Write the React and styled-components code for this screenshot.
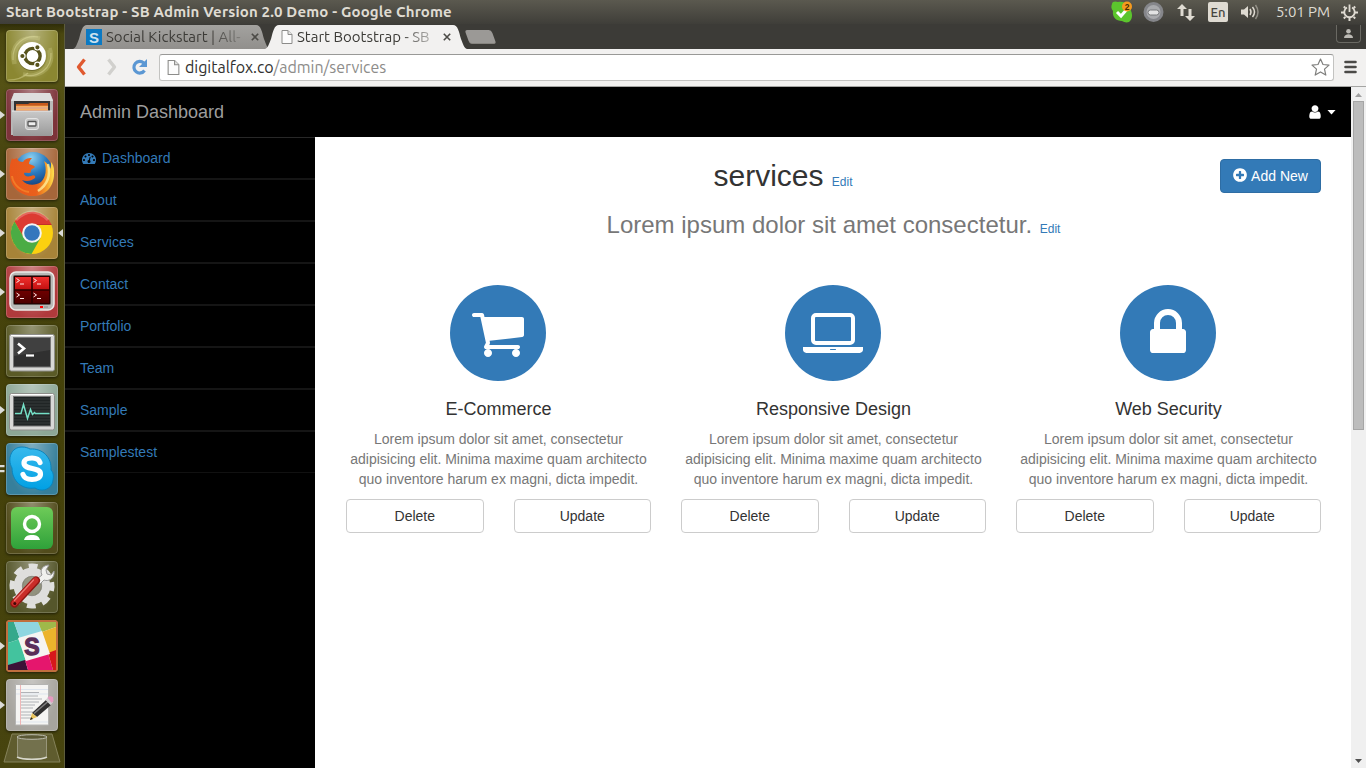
import React from "react";
import styled, { createGlobalStyle } from "styled-components";

const Global = createGlobalStyle`
  * { box-sizing: border-box; }
  html, body { margin: 0; padding: 0; overflow: hidden; }
  body { font-family: "Liberation Sans", Arial, sans-serif; font-size: 14px; line-height: 20px; color: #333; background: #000; }
  h1, h2, h3, p { margin: 0; font-weight: normal; }
  svg { display: block; flex: none; }
`;

const uiFont = `Ubuntu, "Open Sans", "Noto Sans", sans-serif`;

const Desktop = styled.div`
  width: 1366px;
  height: 768px;
  display: flex;
  flex-direction: column;
  overflow: hidden;
`;

/* ---------- top panel ---------- */
const Panel = styled.header`
  height: 24px;
  flex: none;
  display: flex;
  align-items: center;
  padding: 0 8px 0 6px;
  background: linear-gradient(#5b594f, #3f3e39);
  font-family: ${uiFont};
  color: #dfdbd2;
`;
const PanelTitle = styled.div`
  flex: 1;
  font-size: 15px;
  font-weight: 700;
  line-height: 24px;
  letter-spacing: ${(p) => p.$track || "0"};
  white-space: nowrap;
`;
const Indicators = styled.div`
  display: flex;
  align-items: center;
  height: 24px;
`;
const Slot = styled.div`
  width: ${(p) => p.$w}px;
  flex: none;
`;
const Clock = styled.div`
  width: 65px;
  font-size: 15px;
  line-height: 24px;
  letter-spacing: -0.1px;
  white-space: nowrap;
`;
const Lang = styled.div`
  width: 20px;
  height: 20px;
  border-radius: 2px;
  background: #dfdbd2;
  color: #45443e;
  font-size: 13px;
  font-weight: 500;
  line-height: 21px;
  text-align: center;
`;

/* ---------- launcher ---------- */
const Body = styled.div`
  flex: 1;
  display: flex;
  min-height: 0;
`;
const Launcher = styled.nav`
  width: 65px;
  flex: none;
  padding-top: 6px;
  display: flex;
  flex-direction: column;
  gap: 7px;
  border-right: 1px solid #5d5c3c;
  background: linear-gradient(#2f2d08 0, #4a470f 10px, #555215 60px, #48450f 130px, #444109 400px, #47440f 100%);
  overflow: hidden;
`;
const LaunchRow = styled.div`
  height: 52px;
  flex: none;
  display: grid;
  grid-template-columns: 6px 52px 6px;
  align-items: center;
`;
const Tile = styled.div`
  width: 52px;
  height: 52px;
  border-radius: 4px;
  background: radial-gradient(ellipse at 50% 0, rgba(255, 255, 255, 0.36), rgba(255, 255, 255, 0) 75%), ${(p) => p.$bg};
  box-shadow: inset 0 0 0 1px rgba(255, 255, 255, 0.18), 0 1px 3px rgba(0, 0, 0, 0.55);
`;
const Pip = styled.div`
  width: 5px;
  height: 8px;
  background: #dcdcd8;
  clip-path: ${(p) =>
    p.$kind === "double"
      ? "polygon(0 0, 90% 0, 90% 28%, 0 28%, 0 62%, 90% 62%, 90% 90%, 0 90%)"
      : p.$kind === "right"
      ? "polygon(100% 0, 0 50%, 100% 100%)"
      : "polygon(0 0, 100% 50%, 0 100%)"};
  visibility: ${(p) => (p.$kind ? "visible" : "hidden")};
`;
const TrashRow = styled.div`
  margin-top: -5px;
  padding-left: 3px;
`;

/* ---------- browser chrome ---------- */
const Browser = styled.section`
  flex: 1;
  min-width: 0;
  display: flex;
  flex-direction: column;
`;
const TabStrip = styled.div`
  height: 25px;
  flex: none;
  display: flex;
  align-items: flex-end;
  padding-left: 8px;
  background: #3c3b37;
  font-family: ${uiFont};
`;
const TabShape = styled.div`
  width: ${(p) => p.$w}px;
  height: 24px;
  margin-left: ${(p) => (p.$active ? -5 : 0)}px;
  padding: 0 ${(p) => (p.$active ? 15 : 10)}px 0 ${(p) => (p.$active ? 16 : 13)}px;
  display: flex;
  align-items: center;
  background: ${(p) => (p.$active ? "#f2f1f0" : "linear-gradient(#a3a29f, #918f8c)")};
  clip-path: ${(p) =>
    `path("M0 24 C3 23 4 19 6 14 C8 7 9 0 14 0 H${p.$w - 14} C${p.$w - 9} 0 ${p.$w - 8} 7 ${p.$w - 6} 14 C${p.$w - 4} 19 ${p.$w - 3} 23 ${p.$w} 24 Z")`};
`;
const TabLabel = styled.div`
  flex: 1;
  min-width: 0;
  margin-left: 4px;
  overflow: hidden;
  white-space: nowrap;
  font-size: 15px;
  line-height: 24px;
  letter-spacing: ${(p) => p.$track};
  color: #3c3b37;
  mask-image: linear-gradient(90deg, #000 75%, rgba(0, 0, 0, 0.25) 100%);
`;
const TabClose = styled.div`
  width: 10px;
  margin-left: 8px;
`;
const NewTab = styled.div`
  width: 31px;
  height: 14px;
  margin: 0 0 5px -2px;
  background: #9b9996;
  border-bottom: 1px solid #86847f;
  border-radius: 3px;
  transform: skewX(20deg) scaleX(0.86);
`;
const Avatar = styled.div`
  width: 25px;
  height: 18px;
  margin: 0 5px 6px auto;
  display: flex;
  justify-content: center;
  padding-top: 4px;
  border: 1px solid #6a6963;
  border-top: 0;
  border-radius: 0 0 4px 4px;
  background: #383733;
`;
const Toolbar = styled.div`
  height: 38px;
  flex: none;
  display: flex;
  align-items: center;
  padding: 0 9px 1px 10px;
  background: #f2f1f0;
  border-bottom: 1px solid #a5a5a3;
`;
const Address = styled.div`
  flex: 1;
  height: 27px;
  display: flex;
  align-items: center;
  margin: 0 10px 0 11px;
  padding: 0 3px 0 7px;
  background: #fff;
  border: 1px solid #c3c3c1;
  border-top-color: #999997;
  border-radius: 3px;
`;
const Url = styled.div`
  flex: 1;
  margin-left: 5px;
  font-family: ${uiFont};
  font-size: 16px;
  line-height: 24px;
  letter-spacing: ${(p) => p.$track};
  color: #8d8c8a;
  white-space: nowrap;
  b { font-weight: normal; color: #30302e; }
`;

/* ---------- page ---------- */
const Viewport = styled.div`
  flex: 1;
  min-height: 0;
  display: flex;
`;
const Page = styled.div`
  flex: 1;
  display: flex;
  flex-direction: column;
  background: #000;
`;
const NavBar = styled.div`
  height: 50px;
  flex: none;
  display: flex;
  align-items: center;
  padding: 0 15px;
  justify-content: space-between;
`;
const Brand = styled.div`
  font-size: 18px;
  color: #9d9d9d;
`;
const UserMenu = styled.div`
  display: flex;
  align-items: center;
  gap: 4px;
`;
const Caret = styled.i`
  width: 9px;
  height: 5px;
  background: #fff;
  clip-path: polygon(0 0, 100% 0, 50% 100%);
`;
const Columns = styled.div`
  flex: 1;
  display: flex;
`;
const SideNav = styled.ul`
  width: 250px;
  flex: none;
  margin: 0;
  padding: 0;
  list-style: none;
  border-top: 1px solid #282828;
`;
const SideItem = styled.li`
  height: 42px;
  display: flex;
  align-items: center;
  gap: 4px;
  padding: 0 15px 1px;
  color: #337ab7;
  border-bottom: 2px solid #151515;
  &:last-child { border-bottom: 1px solid #111; height: 41px; margin-bottom: 1px; }
`;
const FixedIcon = styled.span`
  width: 18px;
  padding-top: 1px;
  display: flex;
  justify-content: center;
`;
const Main = styled.main`
  flex: 1;
  background: #fff;
  padding: 22px 15px 0 16px;
`;
const TitleRow = styled.div`
  display: flex;
  align-items: flex-start;
  padding: 0 15px;
  height: 53px;
`;
const Title = styled.h1`
  flex: 1;
  text-align: center;
  font-size: 30px;
  line-height: 33px;
`;
const EditLink = styled.a`
  font-size: 12px;
  color: #337ab7;
`;
const Subtitle = styled.h2`
  text-align: center;
  font-size: 24px;
  line-height: 26px;
  color: #777;
  ${EditLink} { margin-left: 1px; }
`;
const AddButton = styled.button`
  width: 101px;
  height: 34px;
  display: flex;
  align-items: center;
  justify-content: center;
  gap: 3px;
  padding: 0 1px 0 0;
  border: 1px solid #2e6da4;
  border-radius: 4px;
  background: #337ab7;
  color: #fff;
  font: 14px/20px "Liberation Sans", Arial, sans-serif;
  svg { margin-bottom: 2px; }
`;
const Cards = styled.div`
  display: grid;
  grid-template-columns: repeat(3, 335px);
  margin-top: 43px;
`;
const Card = styled.article`
  display: flex;
  flex-direction: column;
  align-items: center;
  padding: 0 15px;
  text-align: center;
`;
const Disc = styled.div`
  width: 96px;
  height: 96px;
  margin-right: 1px;
  display: flex;
  align-items: center;
  justify-content: center;
  border-radius: 50%;
  background: #337ab7;
`;
const CardTitle = styled.h3`
  margin: 18px 0 10px;
  font-size: 18px;
  line-height: 20px;
`;
const CardText = styled.p`
  color: #777;
  white-space: nowrap;
`;
const CardActions = styled.div`
  align-self: stretch;
  display: grid;
  grid-template-columns: 1fr 1fr;
  gap: 30px;
  margin-top: 10px;
`;
const PlainButton = styled.button`
  height: 34px;
  padding: 0;
  border: 1px solid #ccc;
  border-radius: 4px;
  background: #fff;
  color: #333;
  font: 14px/20px "Liberation Sans", Arial, sans-serif;
`;
const ScrollBar = styled.div`
  width: 15px;
  flex: none;
  display: flex;
  flex-direction: column;
  align-items: center;
  background: #f0f0f0;
`;
const Thumb = styled.div`
  width: 11px;
  height: 329px;
  margin: 4px 0 auto;
  background: #bcbcbc;
  border: 1px solid #a6a6a6;
`;
const ScrollArrow = styled.div`
  width: 7px;
  height: 4px;
  margin: ${(p) => (p.$up ? "6px 0 0" : "0 0 5px")};
  background: ${(p) => (p.$up ? "#a0a0a0" : "#505050")};
  clip-path: ${(p) => (p.$up ? "polygon(50% 0, 100% 100%, 0 100%)" : "polygon(0 0, 100% 0, 50% 100%)")};
`;

/* ---------- icon glyphs ---------- */
const glyphs = {
  cart: "M704 1536q0 52-38 90t-90 38-90-38-38-90 38-90 90-38 90 38 38 90zm896 0q0 52-38 90t-90 38-90-38-38-90 38-90 90-38 90 38 38 90zm128-1088v512q0 24-16.5 42.5t-40.5 21.5l-1044 122q13 60 13 70 0 16-24 64h920q26 0 45 19t19 45-19 45-45 19h-1024q-26 0-45-19t-19-45q0-11 8-31.5t16-36 21.5-40 15.5-29.5l-177-823h-204q-26 0-45-19t-19-45 19-45 45-19h256q16 0 28.5 6.5t19.5 15.5 13 24.5 8 26 5.5 29.5 4.5 26h1201q26 0 45 19t19 45z",
  lock: "M640 768h512v-192q0-106-75-181t-181-75-181 75-75 181v192zm832 96v576q0 40-28 68t-68 28h-960q-40 0-68-28t-28-68v-576q0-40 28-68t68-28h32v-192q0-184 132-316t316-132 316 132 132 316v192h32q40 0 68 28t28 68z",
  laptop: "M416 1280q-66 0-113-47t-47-113v-704q0-66 47-113t113-47h1088q66 0 113 47t47 113v704q0 66-47 113t-113 47h-1088zm-32-864v704q0 13 9.5 22.5t22.5 9.5h1088q13 0 22.5-9.5t9.5-22.5v-704q0-13-9.5-22.5t-22.5-9.5h-1088q-13 0-22.5 9.5t-9.5 22.5zm1376 928h160v96q0 40-47 68t-113 28h-1600q-66 0-113-28t-47-68v-96h1760zm-720 96q16 0 16-16t-16-16h-160q-16 0-16 16t16 16h160z",
  user: "M1536 1399q0 109-62.5 187t-150.5 78h-854q-88 0-150.5-78t-62.5-187q0-85 8.5-160.5t31.5-152 58.5-131 94-89 134.5-34.5q131 128 313 128t313-128q76 0 134.5 34.5t94 89 58.5 131 31.5 152 8.5 160.5zm-256-887q0 159-112.5 271.5t-271.5 112.5-271.5-112.5-112.5-271.5 112.5-271.5 271.5-112.5 271.5 112.5 112.5 271.5z",
  plus: "M1344 960v-128q0-26-19-45t-45-19h-256v-256q0-26-19-45t-45-19h-128q-26 0-45 19t-19 45v256h-256q-26 0-45 19t-19 45v128q0 26 19 45t45 19h256v256q0 26 19 45t45 19h128q26 0 45-19t19-45v-256h256q26 0 45-19t19-45zm320-64q0 209-103 385.5t-279.5 279.5-385.5 103-385.5-103-279.5-279.5-103-385.5 103-385.5 279.5-279.5 385.5-103 385.5 103 279.5 279.5 103 385.5z",
  gauge: "M384 1152q0-53-37.5-90.5t-90.5-37.5-90.5 37.5-37.5 90.5 37.5 90.5 90.5 37.5 90.5-37.5 37.5-90.5zm192-448q0-53-37.5-90.5t-90.5-37.5-90.5 37.5-37.5 90.5 37.5 90.5 90.5 37.5 90.5-37.5 37.5-90.5zm428 481l101-382q6-26-7.5-48.5t-38.5-29.5-48 6.5-30 39.5l-101 382q-60 5-107 43.5t-63 98.5q-20 77 20 146t117 89 146-20 89-117q16-60-6-117t-72-91zm660-33q0-53-37.5-90.5t-90.5-37.5-90.5 37.5-37.5 90.5 37.5 90.5 90.5 37.5 90.5-37.5 37.5-90.5zm-640-640q0-53-37.5-90.5t-90.5-37.5-90.5 37.5-37.5 90.5 37.5 90.5 90.5 37.5 90.5-37.5 37.5-90.5zm448 192q0-53-37.5-90.5t-90.5-37.5-90.5 37.5-37.5 90.5 37.5 90.5 90.5 37.5 90.5-37.5 37.5-90.5zm320 448q0 261-141 483-19 29-54 29h-1402q-35 0-54-29-141-221-141-483 0-182 71-348t191-286 286-191 348-71 348 71 286 191 191 286 71 348z",
};
const Glyph = ({ name, size, color = "#fff" }) => {
  const w = name === "laptop" ? 1920 : 1792;
  return (
    <svg width={(size * w) / 1792} height={size} viewBox={`0 0 ${w} 1792`} fill={color}>
      <path d={glyphs[name]} />
    </svg>
  );
};

const PageIcon = ({ w = 12, h = 14 }) => (
  <svg width={w} height={h} viewBox="0 0 12 14" fill="#fcfcfc" stroke="#8c8c8a">
    <path d="M1 .5h6l4 4v9H1z" />
    <path d="M7 .5v4h4" fill="#e4e4e2" />
  </svg>
);
const CloseX = () => (
  <svg width="10" height="10" viewBox="0 0 10 10" stroke="#4c4b47" strokeWidth="1.6">
    <path d="M1.8 1.8l6.4 6.4M8.2 1.8L1.8 8.2" />
  </svg>
);

/* ---------- launcher artwork ---------- */
const Art = ({ children, h = 52, w = 52 }) => (
  <svg width={w} height={h} viewBox={`0 0 ${w} ${h}`}>
    {children}
  </svg>
);
const Dash = () => (
  <Art>
    <g fill="none" stroke="#e8e6a8">
      <path d="M8 34C3 16 14 4 34 9M44 18c6 18-8 31-27 26M17 44C33 49 46 36 43 20M34 8C18 4 6 16 9 34" strokeOpacity=".22" strokeWidth="3.5" />
      <path d="M7 30C6 14 18 5 32 7M45 23c1 15-12 25-27 22M2 50c10 0 16-3 20-7" strokeOpacity=".4" strokeWidth="1.2" />
    </g>
    <circle cx="26" cy="27" r="14" fill="#3b390c" opacity=".4" />
    <circle cx="26" cy="26" r="14" fill="#fff" />
    <circle cx="26.5" cy="26" r="7.6" fill="none" stroke="#57531c" strokeWidth="3.4" />
    <g stroke="#fff" strokeWidth="1.2" fill="#57531c">
      <circle cx="16.4" cy="26" r="2.7" />
      <circle cx="31.4" cy="17.3" r="2.7" />
      <circle cx="31.4" cy="34.9" r="2.7" />
    </g>
  </Art>
);
const Files = () => (
  <Art>
    <defs>
      <linearGradient id="cab" x2="0" y2="1"><stop stopColor="#c9c9c9" /><stop offset="1" stopColor="#9a9a9a" /></linearGradient>
    </defs>
    <path d="M8 4h36l3 7v35H5V11z" fill="#b9b9b9" />
    <path d="M8 4h36l3 8H5z" fill="#dedede" />
    <path d="M8 12h36v12H8z" fill="#333" />
    <path d="M10 15h12l2-1h18v10H10z" fill="#c65a1d" />
    <path d="M10 17.5h32M10 20.5h32" stroke="#f6b064" strokeWidth="1.6" />
    <path d="M10 19h32" stroke="#fff" strokeWidth=".8" />
    <path d="M6 22h40v25H7z" fill="url(#cab)" />
    <path d="M6 22h40" stroke="#e8e8e8" />
    <rect x="19.500" y="29.500" width="13" height="11" rx="2.500" fill="#c4c4c4" stroke="#e4e4e4" />
    <rect x="22" y="32.500" width="8" height="4.500" rx=".8" fill="#eee" stroke="#555" strokeWidth="1.3" />
  </Art>
);
const Firefox = () => (
  <Art>
    <defs>
      <radialGradient id="fxg" cx=".45" cy=".15" r=".8"><stop stopColor="#8bd0f0" /><stop offset=".5" stopColor="#2a7abf" /><stop offset="1" stopColor="#12356e" /></radialGradient>
      <linearGradient id="fxf" x2="1" y2="0"><stop stopColor="#e8571b" /><stop offset=".6" stopColor="#e9601c" /><stop offset=".85" stopColor="#f7a52c" /><stop offset="1" stopColor="#ffe14e" /></linearGradient>
    </defs>
    <circle cx="27" cy="23.500" r="19.500" fill="url(#fxg)" />
    <path d="M6 10c-2 6-3 10-2 18 1 12 11 20 23 20 13 0 22-10 21-25 0-4-1-7-3-9 0 3 0 5-1 7-1-4-3-6-6-8 3 8 2 16-3 21-6 4-14 4-19-2 5 2 9 1 13-2 1-2-1-4-4-2-4 1-7 0-7-3 2-1 5 1 7-1-1-3 2-3 4-5-1-2-4-2-6-3 0-2 1-4 3-6-5 0-7 1-9 4-3 0-5-1-6-4-2 1-4 2-5 0z" fill="url(#fxf)" />
    <path d="M42 16c3 12-1 21-10 27" fill="none" stroke="#fff3a0" strokeWidth="2.500" opacity=".75" />
    <path d="M6 28c1 8 8 15 17 16" fill="none" stroke="#f58a2e" strokeWidth="2" opacity=".7" />
  </Art>
);
const ChromeArt = () => (
  <Art>
    <circle cx="26" cy="26" r="21" fill="#fbd00f" />
    <path d="M8.500 14.500A21 21 0 0 1 45.500 17.500H26a9 9 0 0 0-9 12z" fill="#dc3b32" />
    <path d="M8.500 14.500A21 21 0 0 0 25.500 47l9-16-16.500 0z" fill="#4bac44" />
    <path d="M26 17.500h19.500" stroke="#c13128" />
    <circle cx="26" cy="26" r="9.800" fill="#f4f4f4" />
    <circle cx="26" cy="26" r="7.800" fill="#3477bd" />
    <path d="M10 13Q26-3 42 13" stroke="#fff" strokeOpacity=".22" strokeWidth="3" fill="none" />
  </Art>
);
const Frame = ({ fill, children }) => (
  <Art>
    <rect x="3.500" y="9.500" width="45" height="36.500" rx="2" fill="#d8d8d6" stroke="#8e8e8a" />
    <path d="M5 10.500h42" stroke="#fff" />
    <rect x="7.500" y="12.500" width="37" height="29.500" fill={fill} stroke="#777" />
    {children}
  </Art>
);
const Terminator = () => (
  <Art>
    <defs><linearGradient id="tr" x2="0" y2="1"><stop stopColor="#f3302e" /><stop offset=".5" stopColor="#c00f0f" /><stop offset=".52" stopColor="#6f0000" /><stop offset="1" stopColor="#4c0000" /></linearGradient></defs>
    <rect x="4" y="6" width="44" height="38" rx="6" fill="#b9b9b7" stroke="#ebebe9" strokeWidth="1.500" />
    <rect x="7" y="9" width="38" height="30" rx="2" fill="#5f5b58" />
    <rect x="8.500" y="10.500" width="35" height="27" fill="url(#tr)" stroke="#2a0000" />
    <path d="M26 11v26M9 24h34" stroke="#290000" strokeWidth="1.500" />
    <g fill="none" stroke="#ffe6e6" strokeWidth="1">
      <path d="M10.500 12.500l3 2-3 2M14 18h4M27.500 12.500l3 2-3 2M31 18h4M10.500 27l3 2-3 2M14 32.500h4M27.500 27l3 2-3 2M31 32.500h4" />
    </g>
    <path d="M34 41h3" stroke="#f00" strokeWidth="2" />
    <path d="M38 41h4" stroke="#8a8a88" />
  </Art>
);
const Terminal = () => (
  <Frame fill="#303030">
    <path d="M8 13h36v12L8 31z" fill="#fff" opacity=".08" />
    <path d="M12 18.500l6 5-6 5" fill="none" stroke="#fff" strokeWidth="2.600" />
    <path d="M20 30.500h8" stroke="#fff" strokeWidth="2.200" />
  </Frame>
);
const Monitor = () => (
  <Frame fill="#202525">
    <path d="M8 15h36M8 18h36M8 21h36M8 24h36M8 27h36M8 30h36M8 33h36M8 36h36M8 39h36" stroke="#3c4342" strokeWidth=".8" />
    <path d="M9 29.500h6l2.500-9 4 14 3-9 2 5 2-2 1 1h14" fill="none" stroke="#74dfc6" strokeWidth="1.500" />
  </Frame>
);
const Letter = styled.text`
  font-family: "Liberation Sans", Arial, sans-serif;
  font-weight: 700;
  text-anchor: middle;
`;
const Skype = () => (
  <Art>
    <defs><linearGradient id="sk" x2="0" y2="1"><stop stopColor="#38b9ec" /><stop offset="1" stopColor="#00a0e4" /></linearGradient></defs>
    <path d="M16 4c4 0 6 1 8 2 13-1 22 9 21 21 3 3 3 8 1 14-3 6-11 8-17 4C16 47 6 38 6 25 1 16 5 4 16 4z" fill="url(#sk)" stroke="#0a84bd" />
    <path d="M34 19.500c-1-3-4.500-4.500-8-4.500-5 0-8 2-8 5 0 7.500 16.500 3.500 16.500 11 0 3.500-3.500 5.500-8.500 5.500-4.500 0-8-2-9-5" fill="none" stroke="#fff" strokeWidth="5.200" strokeLinecap="round" />
  </Art>
);
const OkIcon = () => (
  <Art>
    <defs><linearGradient id="ok" x2="0" y2="1"><stop stopColor="#6ecb58" /><stop offset="1" stopColor="#2fa13a" /></linearGradient></defs>
    <rect x="5" y="5" width="42" height="42" rx="6" fill="url(#ok)" />
    <circle cx="26" cy="22" r="7.500" fill="none" stroke="#fff" strokeWidth="3.400" />
    <path d="M18 38c1-4 4-5 8-5s7 1 8 5z" fill="#fff" />
  </Art>
);
const Settings = () => (
  <Art>
    <g transform="rotate(-11 26 25)">
      <circle cx="26" cy="25" r="19.500" fill="none" stroke="#e0e0de" strokeWidth="6" strokeDasharray="8.500 6.815" />
    </g>
    <circle cx="26" cy="25" r="14" fill="none" stroke="#dededc" strokeWidth="8.500" />
    <circle cx="26" cy="25" r="9.700" fill="none" stroke="#8d8d84" strokeWidth="1" />
    <circle cx="26" cy="25" r="9.200" fill="#a8a8a0" opacity=".6" />
    <path d="M31 18l5-4c-3-6 2-10 7-10l-3 5 1 4 4 1 3-4c1 7-5 11-10 9l-4 4z" fill="#f1f1ef" stroke="#999" />
    <path d="M8.500 42.500L30 19.500" stroke="#8f1512" strokeWidth="8" strokeLinecap="round" />
    <path d="M8.500 42L29.500 19.500" stroke="#c92d29" strokeWidth="6" strokeLinecap="round" />
    <path d="M8.500 39.500L27.500 19" stroke="#ee7a74" strokeWidth="1.200" strokeLinecap="round" />
    <circle cx="8.800" cy="42.500" r="1.500" fill="#3f0908" />
  </Art>
);
const Slack = () => (
  <Art>
    <rect x="0" y="0" width="52" height="52" rx="4" fill="#c06f3e" />
    <g transform="translate(2 2)">
      <path d="M0 0h48v48H0z" fill="#f4f2f0" />
      <path d="M0 0h6l6 17L0 21z" fill="#35a88c" />
      <path d="M6 0h24l4 10-22 7z" fill="#8fd6e0" />
      <path d="M30 0h18v5l-14 5z" fill="#9fb94a" />
      <path d="M34 10l14-5v24l-8 3z" fill="#ecb32c" />
      <path d="M0 21l12-4 6 23-18 6z" fill="#43c39e" />
      <path d="M0 43l17-5 3 10H0z" fill="#3c1237" />
      <path d="M17 38l23-7 5 17H20z" fill="#e5166d" />
      <path d="M40 31l8-3v20h-3z" fill="#d6171b" />
      <path d="M10 16l24-7 8 23-24 7z" fill="#f6f4f2" />
    </g>
    <Letter x="26" y="34.500" fontSize="23" fill="#5a2e59" stroke="#5a2e59" strokeWidth="1.300">S</Letter>
  </Art>
);
const Editor = () => (
  <Art>
    <path d="M9.500 5.500h33V46h-33z" fill="#f5f5f3" stroke="#b4b4b2" />
    <g stroke="#a8abb0" strokeWidth=".9">
      <path d="M15 13.500h18M15 17h17M15 20h21M15 23h18M15 26h14M15 29h12M15 33h17M15 36h10M15 39h9" />
    </g>
    <path d="M10 10.500h32M10 15h32M10 43h32" stroke="#cdd9ea" strokeWidth=".6" />
    <path d="M14.500 6v40" stroke="#eda7a7" strokeWidth=".8" />
    <path d="M26 34l14-13 5 5-14 12z" fill="#303030" />
    <path d="M28 34.500l14-12" stroke="#808080" strokeWidth="1.500" />
    <path d="M24 41l2-7 5 4z" fill="#e8c45c" />
    <path d="M24 41l1-3 2 2z" fill="#222" />
    <path d="M39.500 21l2.500-2.500 5 5-2.500 2.500z" fill="#cfcfcf" />
    <path d="M41.500 18.500l2.500-1.500 3 1 .5 4-2 2z" fill="#e59ac0" />
  </Art>
);
const Trash = () => (
  <Art w={58} h={35}>
    <path d="M9 1h40l8 28H1z" fill="#5f5c2e" stroke="#85825a" />
    <path d="M14 4h30v21c-6 3-24 3-30 0z" fill="#807f62" opacity=".6" />
    <ellipse cx="29" cy="4" rx="15" ry="2.300" fill="#5b5936" stroke="#bdbdae" />
    <path d="M14 24c6 3 24 3 30 0" fill="none" stroke="#d8d8cc" strokeWidth="1.500" />
    <path d="M14.500 5v18M43.500 5v18" stroke="#98967a" />
  </Art>
);

const apps = [
  { bg: "#8b8731", art: Dash },
  { bg: "#7d333a", art: Files, left: "single" },
  { bg: "#a6663a", art: Firefox, left: "single" },
  { bg: "#a78338", art: ChromeArt, left: "single", right: "right" },
  { bg: "#b03a3c", art: Terminator, left: "single" },
  { bg: "#5a5a27", art: Terminal },
  { bg: "#8da796", art: Monitor, left: "single" },
  { bg: "#367f9b", art: Skype, left: "double" },
  { bg: "#524c1c", art: OkIcon },
  { bg: "#55562b", art: Settings },
  { bg: "#b36638", art: Slack, left: "single" },
  { bg: "#a6a49e", art: Editor, left: "single" },
];

const sideLinks = ["Dashboard", "About", "Services", "Contact", "Portfolio", "Team", "Sample", "Samplestest"];
const services = [
  { icon: "cart", title: "E-Commerce" },
  { icon: "laptop", title: "Responsive Design" },
  { icon: "lock", title: "Web Security" },
];

const TopPanel = () => (
  <Panel>
    <PanelTitle $track="0.15px">Start Bootstrap - SB Admin Version 2.0 Demo - Google Chrome</PanelTitle>
    <Indicators>
      <Slot $w={32}>
        <svg width="22" height="24" viewBox="0 0 22 24">
          <path d="M1 4c0-3 4-3 6-2 6-1 12 2 13 9 2 4 1 9-2 11-3 1-5 0-7-1C5 21 1 17 2 11 0 9 0 6 1 4z" fill="#5cc52d" />
          <path d="M6 12l4 4 7-8" fill="none" stroke="#fff" strokeWidth="3" />
          <circle cx="16" cy="6.500" r="5" fill="#f69a1e" />
          <Letter x="16" y="9.500" fontSize="8.500" fill="#4b2d00">2</Letter>
        </svg>
      </Slot>
      <Slot $w={34}>
        <svg width="21" height="22" viewBox="0 0 21 22">
          <circle cx="10.500" cy="11" r="10" fill="#85868a" />
          <circle cx="10.500" cy="11" r="7" fill="#a9aaad" />
          <rect x="5" y="9" width="11" height="5" rx="2.500" fill="#e3e3e3" stroke="#77787a" />
        </svg>
      </Slot>
      <Slot $w={31}>
        <svg width="18" height="17" viewBox="0 0 18 17" fill="#dfdbd2">
          <path d="M5 0l5 5H6.500v7h-3V5H0zM13 17l-5-5h3.500V5h3v7H18z" />
        </svg>
      </Slot>
      <Slot $w={32}><Lang>En</Lang></Slot>
      <Slot $w={36}>
        <svg width="20" height="16" viewBox="0 0 20 16" fill="none" stroke="#dfdbd2" strokeWidth="1.500">
          <path d="M1 5.500h3l4-3.500v12L4 10.500H1z" fill="#dfdbd2" stroke="none" />
          <path d="M10 5q2 3 0 6M12.500 3q4 5 0 10" />
          <path d="M15.500 1q5 7 0 14" strokeOpacity=".45" />
        </svg>
      </Slot>
      <Clock>5:01 PM</Clock>
      <svg width="17" height="18" viewBox="0 0 17 18" fill="none" stroke="#dfdbd2">
        <path d="M6 4.500a5.200 5.200 0 1 0 5 0" strokeWidth="1.800" />
        <path d="M8.500 1.500v7.500" strokeWidth="1.800" />
        <path d="M2.800 3.500l1.500 1.500M14.200 3.500L12.700 5M0 9.500h3M14 9.500h3M2.800 15.500l1.600-1.600M14.200 15.500l-1.600-1.600M8.500 15v3" strokeWidth="2" />
      </svg>
    </Indicators>
  </Panel>
);

const BrowserChrome = () => (
  <>
    <TabStrip>
      <TabShape $w={197}>
        <svg width="16" height="16" viewBox="0 0 16 16">
          <path d="M0 0h16v16H0z" fill="#0b79c3" />
          <Letter x="8" y="13.500" fontSize="15" fill="#cde2ef">S</Letter>
        </svg>
        <TabLabel $track="0">Social Kickstart | All-</TabLabel>
        <TabClose><CloseX /></TabClose>
      </TabShape>
      <TabShape $w={202} $active>
        <PageIcon />
        <TabLabel $track="0">Start Bootstrap - SB</TabLabel>
        <TabClose><CloseX /></TabClose>
      </TabShape>
      <NewTab />
      <Avatar>
        <svg width="9" height="9" viewBox="0 0 9 9" fill="#bdbbb5"><circle cx="4.500" cy="2.300" r="2.300" /><path d="M0 9c0-5 9-5 9 0z" /></svg>
      </Avatar>
    </TabStrip>
    <Toolbar>
      <Slot $w={30}>
        <svg width="12" height="18" viewBox="0 0 12 18" fill="none" strokeLinejoin="round" stroke="#e0592f" strokeWidth="3.400"><path d="M9.500 1.500L3.500 9l6 7.500" /></svg>
      </Slot>
      <Slot $w={26}>
        <svg width="12" height="18" viewBox="0 0 12 18" fill="none" strokeLinejoin="round" stroke="#d1d0cd" strokeWidth="3.400"><path d="M3.500 1.500l6 7.500-6 7.500" /></svg>
      </Slot>
      <Slot $w={17}>
        <svg width="17" height="18" viewBox="0 0 17 18">
          <path d="M13.500 12.500a5.800 5.800 0 1 1-.8-7.500" fill="none" stroke="#5b97d3" strokeWidth="3.200" />
          <path d="M16 1v8H8z" fill="#5b97d3" />
        </svg>
      </Slot>
      <Address>
        <PageIcon w={13} h={15} />
        <Url $track="-0.03px"><b>digitalfox.co</b>/admin/services</Url>
        <svg width="19" height="18" viewBox="0 0 19 18" fill="#fff" stroke="#7e7e7c" strokeWidth="1.200"><path d="M9.500 1l2.500 5.500 6 .6-4.500 4 1.300 6-5.300-3.200-5.300 3.200 1.300-6-4.500-4 6-.6z" strokeLinejoin="round" /></svg>
      </Address>
      <svg width="13" height="14" viewBox="0 0 13 14" stroke="#4b4a47" strokeWidth="2.600" strokeLinecap="round"><path d="M1.500 2h10M1.500 7h10M1.500 12h10" /></svg>
    </Toolbar>
  </>
);

export default function App() {
  return (
    <Desktop>
      <Global />
      <TopPanel />
      <Body>
        <Launcher>
          {apps.map(({ bg, art: Picture, left, right }, i) => (
            <LaunchRow key={i}>
              <Pip $kind={left} />
              <Tile $bg={bg}><Picture /></Tile>
              <Pip $kind={right} />
            </LaunchRow>
          ))}
          <TrashRow><Trash /></TrashRow>
        </Launcher>
        <Browser>
          <BrowserChrome />
          <Viewport>
            <Page>
              <NavBar>
                <Brand>Admin Dashboard</Brand>
                <UserMenu><Glyph name="user" size={16} /><Caret /></UserMenu>
              </NavBar>
              <Columns>
                <SideNav>
                  {sideLinks.map((label, i) => (
                    <SideItem key={label}>
                      {i === 0 && <FixedIcon><Glyph name="gauge" size={14} color="#337ab7" /></FixedIcon>}
                      {label}
                    </SideItem>
                  ))}
                </SideNav>
                <Main>
                  <TitleRow>
                    <Title>services <EditLink>Edit</EditLink></Title>
                    <AddButton><Glyph name="plus" size={16} />Add New</AddButton>
                  </TitleRow>
                  <Subtitle>Lorem ipsum dolor sit amet consectetur. <EditLink>Edit</EditLink></Subtitle>
                  <Cards>
                    {services.map(({ icon, title }) => (
                      <Card key={title}>
                        <Disc><Glyph name={icon} size={56} /></Disc>
                        <CardTitle>{title}</CardTitle>
                        <CardText>
                          Lorem ipsum dolor sit amet, consectetur<br />
                          adipisicing elit. Minima maxime quam architecto<br />
                          quo inventore harum ex magni, dicta impedit.
                        </CardText>
                        <CardActions>
                          <PlainButton>Delete</PlainButton>
                          <PlainButton>Update</PlainButton>
                        </CardActions>
                      </Card>
                    ))}
                  </Cards>
                </Main>
              </Columns>
            </Page>
            <ScrollBar>
              <ScrollArrow $up />
              <Thumb />
              <ScrollArrow />
            </ScrollBar>
          </Viewport>
        </Browser>
      </Body>
    </Desktop>
  );
}
